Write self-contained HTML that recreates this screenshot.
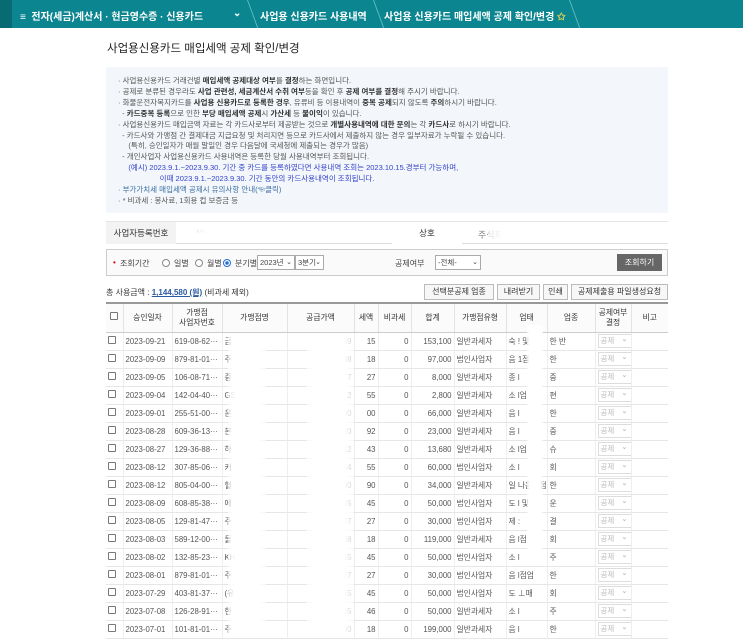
<!DOCTYPE html>
<html><head><meta charset="utf-8"><style>
*{margin:0;padding:0;box-sizing:border-box}
body{width:743px;height:636px;overflow:hidden;background:#fff;font-family:"Liberation Sans","Noto Sans CJK KR",sans-serif;font-size:9px;color:#444;position:relative}
.bar{position:absolute;left:0;top:0;width:743px;height:28px;background:#0b8691;color:#fff;font-size:10px;font-weight:bold}
.bar .dk{position:absolute;left:0;top:0;width:12px;height:28px;background:#086a73}
.bar span{position:absolute;top:8px}
.chev{position:absolute;top:0;width:10px;height:28px;border-right:1px solid #5fb9c1;transform:skewX(20deg);transform-origin:top}
.title{position:absolute;left:107px;top:40px;font-size:11.5px;color:#222}
.info{position:absolute;left:106px;top:67px;width:562px;height:146px;background:#f3f6fa;padding:9px 0 0 12px;font-size:7.5px;line-height:10.9px;color:#555;white-space:nowrap;overflow:hidden}
.info b{color:#333}
.blue{color:#3344cc}
.biz{position:absolute;left:106px;top:221px;width:562px;height:23px;border-top:1px solid #e5e5e5;border-bottom:1px solid #ddd}
.biz .lab{position:absolute;top:0;height:22px;background:#f3f3f3;line-height:22px;text-align:center;font-size:8.5px;color:#333}
.srch{position:absolute;left:106px;top:249px;width:562px;height:27px;border:1px solid #ccc;background:#fafafa;font-size:8px}
.srch > *{position:absolute}
.sel{border:1px solid #aaa;background:#fff;height:15px;top:5px;line-height:13px;padding-left:2px;font-size:7.5px;white-space:nowrap;overflow:hidden}
.sel i{position:absolute;right:2px;top:0;font-style:normal;font-size:7px}
.rad{width:8px;height:8px;border:1px solid #888;border-radius:50%;top:9px;background:#fff}
.btn{position:absolute;top:284px;height:16px;border:1px solid #bbb;background:#f7f7f7;font-size:8px;line-height:14px;text-align:center;color:#333}
table{position:absolute;left:106px;top:302px;width:562px;border-collapse:collapse;table-layout:fixed;font-size:7.8px}
th{height:29px;border-top:2px solid #999;border-bottom:1px solid #ccc;border-left:1px solid #e3e3e3;font-weight:normal;color:#333;background:#fbfbfb;line-height:10px}
td{height:18px;border-bottom:1px solid #e6e6e6;border-left:1px solid #eee;white-space:nowrap;overflow:hidden;color:#555;padding:0 2px}
th:first-child,td:first-child{border-left:none}
.r{text-align:right}
.cb{display:inline-block;width:8px;height:8px;border:1px solid #777;border-radius:1px;background:#fff}
.dd{display:inline-block;width:34px;height:14px;border:1px solid #ddd;color:#bbb;font-size:7.5px;line-height:12px;padding-left:2px;position:relative}
.dd:after{content:"⌄";position:absolute;right:3px;top:-2px;color:#aaa}
.blur{position:absolute;background:linear-gradient(90deg,rgba(255,255,255,.6),#fff 20%,#fff 80%,rgba(255,255,255,.6))}
</style></head><body>
<div class="bar"><div class="dk"></div>
<span style="left:20px">≡ &nbsp;전자(세금)계산서 · 현금영수증 · 신용카드</span>
<span style="left:233px">⌄</span>
<div class="chev" style="left:238px"></div>
<span style="left:260px">사업용 신용카드 사용내역</span>
<div class="chev" style="left:364px"></div>
<span style="left:384px">사업용 신용카드 매입세액 공제 확인/변경 <span style="position:static;color:#f1d54a">✩</span></span>
<div class="chev" style="left:560px"></div>
</div>
<div class="title">사업용신용카드 매입세액 공제 확인/변경</div>
<div class="info">
· 사업용신용카드 거래건별 <b>매입세액 공제대상 여부</b>를 <b>결정</b>하는 화면입니다.<br>
· 공제로 분류된 경우라도 <b>사업 관련성, 세금계산서 수취 여부</b>등을 확인 후 <b>공제 여부를 결정</b>해 주시기 바랍니다.<br>
· 화물운전자복지카드를 <b>사업용 신용카드로 등록한 경우</b>, 유류비 등 이용내역이 <b>중복 공제</b>되지 않도록 <b>주의</b>하시기 바랍니다.<br>
&nbsp;&nbsp;- <b>카드중복 등록</b>으로 인한 <b>부당 매입세액 공제</b>시 <b>가산세</b> 등 <b>불이익</b>이 있습니다.<br>
· 사업용신용카드 매입금액 자료는 각 카드사로부터 제공받는 것으로 <b>개별사용내역에 대한 문의</b>는 각 <b>카드사</b>로 하시기 바랍니다.<br>
&nbsp;&nbsp;- 카드사와 가맹점 간 결제대금 지급요청 및 처리지연 등으로 카드사에서 제출하지 않는 경우 일부자료가 누락될 수 있습니다.<br>
&nbsp;&nbsp;&nbsp;&nbsp;&nbsp;(특히, 승인일자가 매월 말일인 경우 다음달에 국세청에 제출되는 경우가 많음)<br>
&nbsp;&nbsp;- 개인사업자 사업용신용카드 사용내역은 등록한 당월 사용내역부터 조회됩니다.<br>
<span class="blue">&nbsp;&nbsp;&nbsp;&nbsp;&nbsp;(예시) 2023.9.1.~2023.9.30. 기간 중 카드를 등록하였다면 사용내역 조회는 2023.10.15.경부터 가능하며,<br>
&nbsp;&nbsp;&nbsp;&nbsp;&nbsp;&nbsp;&nbsp;&nbsp;&nbsp;&nbsp;&nbsp;&nbsp;&nbsp;&nbsp;&nbsp;&nbsp;&nbsp;&nbsp;&nbsp;&nbsp;이때 2023.9.1.~2023.9.30. 기간 동안의 카드사용내역이 조회됩니다.</span><br>
<span style="color:#3a6ea5">· 부가가치세 매입세액 공제시 유의사항 안내(☜클릭)</span><br>
· * 비과세 : 봉사료, 1회용 컵 보증금 등
</div>
<div class="biz">
<div class="lab" style="left:0;width:70px">사업자등록번호</div>
<span style="position:absolute;left:90px;top:6px;color:#bbb">***-**-*****</span>
<div class="lab" style="left:286px;width:70px;background:#fff">상호</div>
<span style="position:absolute;left:372px;top:6px;color:#888">주식회</span>
</div>
<div class="srch">
<span style="left:6px;top:8px;color:#d00">•</span><span style="left:13px;top:8px">조회기간</span>
<div class="rad" style="left:55px"></div><span style="left:67px;top:8px">일별</span>
<div class="rad" style="left:88px"></div><span style="left:100px;top:8px">월별</span>
<div class="rad" style="left:116px;border-color:#1e6fd9;background:radial-gradient(#1e6fd9 40%,#fff 45%)"></div><span style="left:128px;top:8px">분기별</span>
<div class="sel" style="left:150px;width:38px">2023년<i>⌄</i></div>
<div class="sel" style="left:188px;width:29px">3분기<i>⌄</i></div>
<span style="left:288px;top:8px">공제여부</span>
<div class="sel" style="left:328px;width:46px">-전체-<i>⌄</i></div>
<div style="left:510px;top:4px;width:45px;height:17px;background:#666;color:#fff;text-align:center;line-height:17px;font-size:8px">조회하기</div>
</div>
<div style="position:absolute;left:106px;top:287px;font-size:8px;color:#333">총 사용금액 : <u style="color:#2a5aa0;font-weight:bold">1,144,580 (원)</u> (비과세 제외)</div>
<div class="btn" style="left:424px;width:70px">선택분공제 업종</div>
<div class="btn" style="left:497px;width:43px">내려받기</div>
<div class="btn" style="left:543px;width:25px">인쇄</div>
<div class="btn" style="left:571px;width:97px">공제제출용 파일생성요청</div>
<table>
<colgroup><col style="width:17px"><col style="width:49px"><col style="width:50px"><col style="width:65px"><col style="width:67px"><col style="width:24px"><col style="width:33px"><col style="width:43px"><col style="width:52px"><col style="width:41px"><col style="width:48px"><col style="width:36px"><col style="width:37px"></colgroup>
<tr><th><span class="cb"></span></th><th>승인일자</th><th>가맹점<br>사업자번호</th><th>가맹점명</th><th>공급가액</th><th>세액</th><th>비과세</th><th>합계</th><th>가맹점유형</th><th>업태</th><th>업종</th><th>공제여부<br>결정</th><th>비고</th></tr>
<tbody id="tb"></tbody>
</table>
<script>
var d=[["2023-09-21","619-08-62","금","139","15","153,100","일반과세자","숙 ! 및","한 반"],
["2023-09-09","879-81-01","주","88","18","97,000","법인사업자","음 1점업","한"],
["2023-09-05","106-08-71","중","7","27","8,000","일반과세자","종 l","중"],
["2023-09-04","142-04-40","GS","2","55","2,800","일반과세자","소 l업","편"],
["2023-09-01","255-51-00","운","60","00","66,000","일반과세자","음 l","한"],
["2023-08-28","609-36-13","본","20","92","23,000","일반과세자","음 l","중"],
["2023-08-27","129-36-88","하","12","43","13,680","일반과세자","소 l업","슈"],
["2023-08-12","307-85-06","커","54","55","60,000","법인사업자","소 l","회"],
["2023-08-12","805-04-00","혈","30","90","34,000","일반과세자","일 나음식점","한"],
["2023-08-09","608-85-38","에","45","45","50,000","법인사업자","도 l 및","운"],
["2023-08-05","129-81-47","주","27","27","30,000","법인사업자","제 :","결"],
["2023-08-03","589-12-00","돌","108","18","119,000","일반과세자","음 l점","회"],
["2023-08-02","132-85-23","KH","45","45","50,000","법인사업자","소 l","주"],
["2023-08-01","879-81-01","주","27","27","30,000","법인사업자","음 l점업","한"],
["2023-07-29","403-81-37","(유","45","45","50,000","법인사업자","도 ⊥매","회"],
["2023-07-08","126-28-91","한","45","46","50,000","일반과세자","소 l","주"],
["2023-07-01","101-81-01","주","180","18","199,000","일반과세자","음 l","한"]];
var h="";d.forEach(function(r){h+='<tr><td><span class="cb"></span></td><td>'+r[0]+'</td><td>'+r[1]+'···</td><td>'+r[2]+'</td><td class="r">'+r[3]+'</td><td class="r">'+r[4]+'</td><td class="r">0</td><td class="r">'+r[5]+'</td><td>'+r[6]+'</td><td>'+r[7]+'</td><td>'+r[8]+'</td><td><span class="dd">공제</span></td><td></td></tr>'});
document.getElementById("tb").innerHTML=h;
</script>
<div class="blur" style="left:228px;top:333px;width:38px;height:303px"></div>
<div class="blur" style="left:306px;top:333px;width:48px;height:303px"></div>
<div class="blur" style="left:527px;top:325px;width:16px;height:240px"></div>
<div class="blur" style="left:196px;top:223px;width:60px;height:20px"></div>
<div class="blur" style="left:488px;top:223px;width:70px;height:20px"></div>
</body></html>
